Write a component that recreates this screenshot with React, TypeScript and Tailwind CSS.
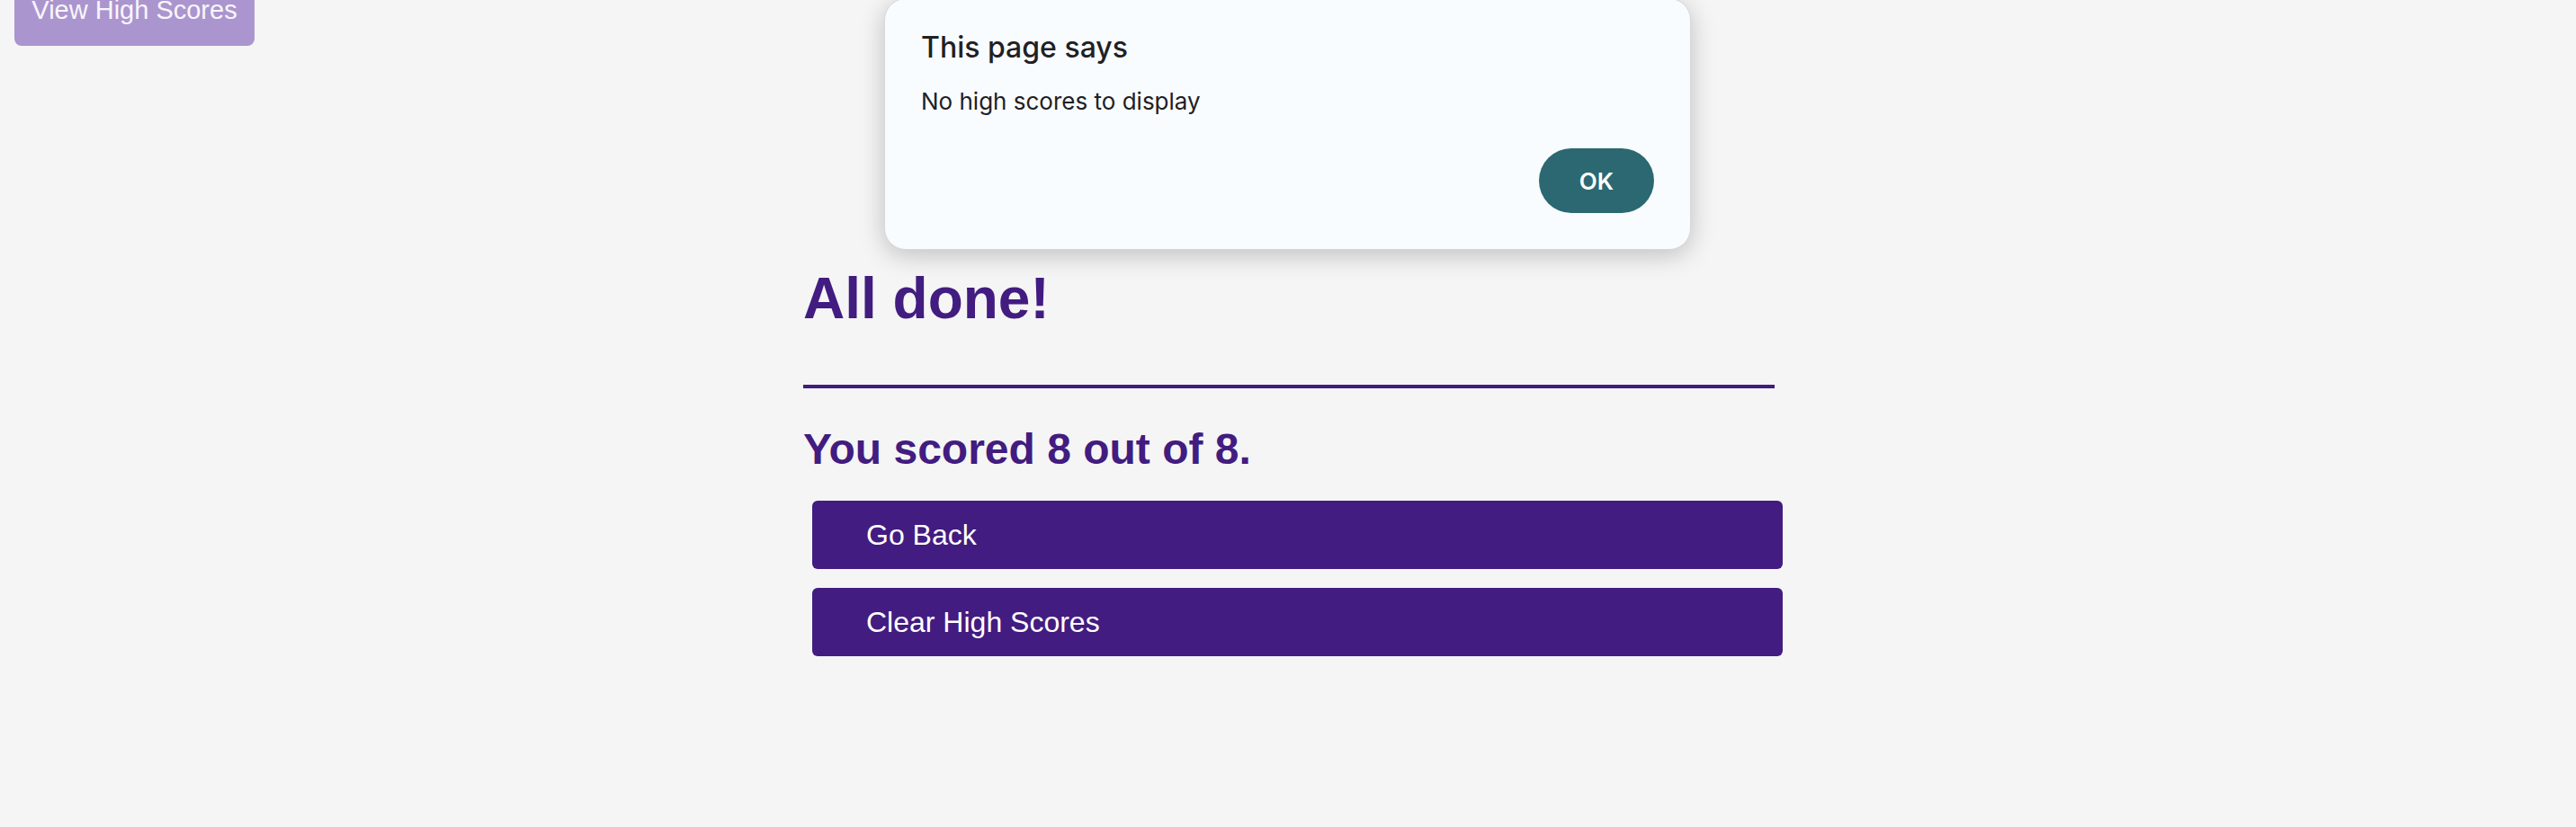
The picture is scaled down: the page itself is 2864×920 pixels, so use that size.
import React from 'react';

// Quiz end screen with the browser's "no high scores" alert on top
export default function App() {
  return (
    <div className="relative flex min-h-[920px] flex-col overflow-hidden bg-[#f5f5f5] font-['Liberation_Sans',Arial,sans-serif]">
      <header className="ml-[16px] mt-[-29px]">
        <button className="w-[267px] rounded-[8px] bg-[#ab95cf] py-[24px] text-center text-[29px] leading-[32px] text-[#f8f6fb]">
          View High Scores
        </button>
      </header>

      <main className="mx-auto mt-[249px] flex w-[1082px] flex-col pl-[2px]">
        <h1 className="text-[64px] font-bold leading-none text-[#421c80]">All done!</h1>
        <div className="mt-[64px] h-[4px] w-full bg-[#421c80]" />
        <h2 className="mt-[44px] text-[48px] font-bold leading-none text-[#421c80]">You scored 8 out of 8.</h2>
        <button className="ml-[10px] mt-[33px] flex h-[76px] w-[1079px] items-center rounded-[6px] bg-[#421c80] pl-[60px] text-left text-[32px] leading-none text-white">
          Go Back
        </button>
        <button className="ml-[10px] mt-[21px] flex h-[76px] w-[1079px] items-center rounded-[6px] bg-[#421c80] pl-[60px] text-left text-[32px] leading-none text-white">
          Clear High Scores
        </button>
      </main>

      {/* alert dialog */}
      <div className="absolute left-[983px] top-[-2px] flex w-[897px] flex-col rounded-[24px] border border-[#d6d8da] bg-[#f8fcfe] px-[40px] pb-[40px] pt-[38px] font-['Inter',sans-serif] shadow-[0_6px_28px_rgba(0,0,0,0.22)]">
        <p className="text-[32px] font-medium leading-none text-[#1f2124]">This page says</p>
        <p className="mt-[31px] text-[26px] leading-none text-[#1f2124]">No high scores to display</p>
        <div className="mt-[39px] flex justify-end">
          <button className="h-[72px] w-[128px] rounded-full bg-[#2b6871] text-[26px] font-semibold text-white">OK</button>
        </div>
      </div>
    </div>
  );
}
